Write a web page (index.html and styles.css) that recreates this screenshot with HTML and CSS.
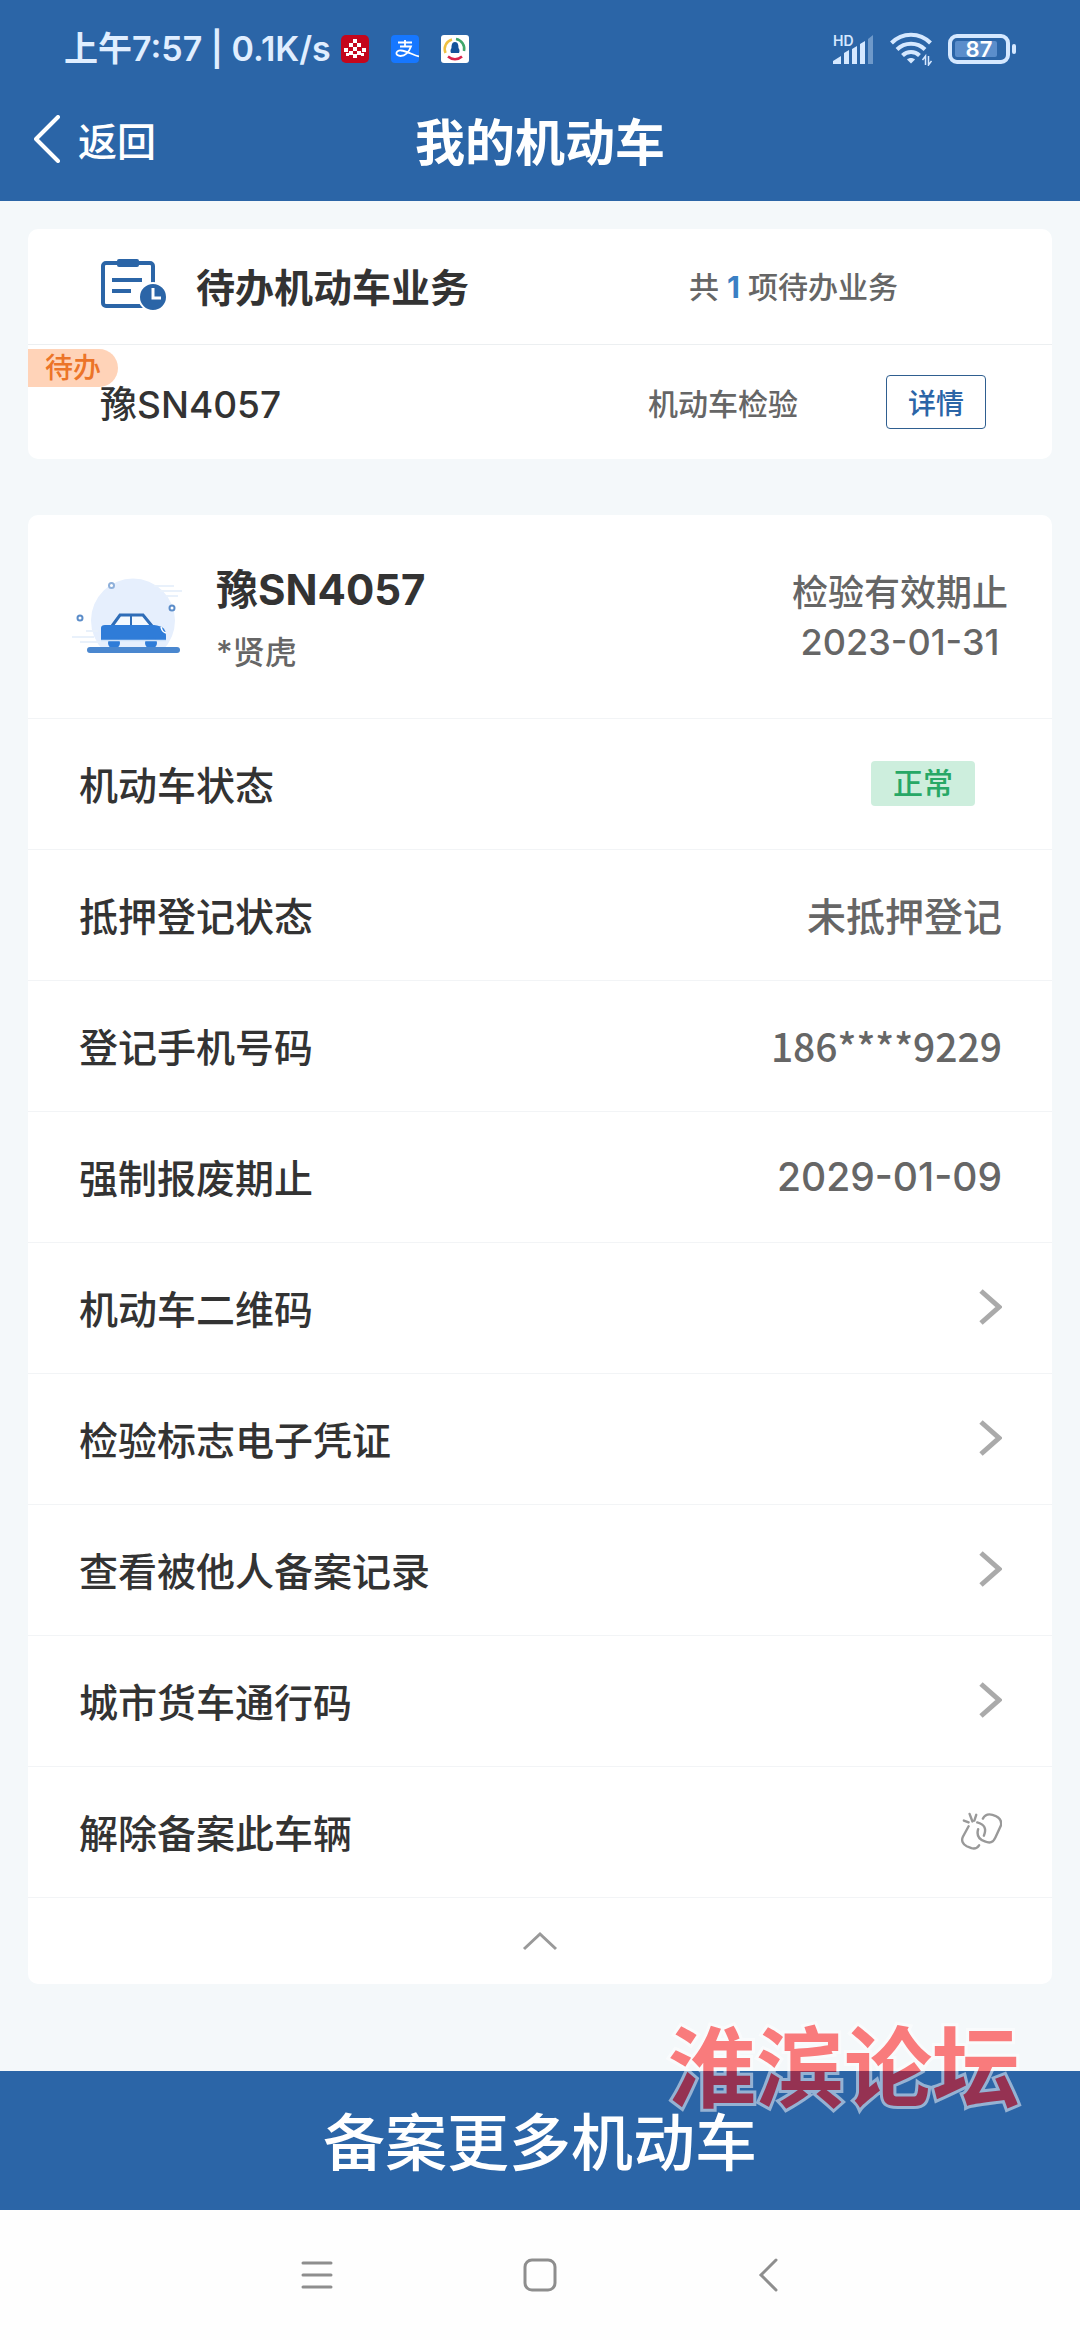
FILE: index.html
```html
<!DOCTYPE html>
<html lang="zh-CN">
<head>
    <meta charset="UTF-8">
    <meta name="viewport" content="width=device-width, initial-scale=1.0">
    <title>我的机动车</title>
    <link rel="stylesheet" href="styles.css">
</head>
<body>
    <!-- Header -->
    <header class="top">
        <div class="status-bar">
            <span class="status-time">上午7:57 | 0.1K/s</span>
            <div class="status-apps">
                <svg width="28" height="28" viewBox="0 0 28 28" aria-hidden="true">
                    <rect width="28" height="28" rx="5" fill="#c4061c"/>
                    <g fill="#fff">
                        <rect x="12" y="4" width="4" height="4"/>
                        <rect x="8" y="8" width="4" height="4"/>
                        <rect x="16" y="8" width="4" height="4"/>
                        <rect x="12" y="12" width="4" height="4"/>
                        <rect x="3" y="13" width="4" height="4"/>
                        <rect x="21" y="13" width="4" height="4"/>
                        <rect x="8" y="16" width="4" height="4"/>
                        <rect x="16" y="16" width="4" height="4"/>
                        <rect x="5" y="18" width="3" height="3"/>
                        <rect x="12" y="19" width="4" height="4"/>
                        <rect x="20" y="18" width="3" height="3"/>
                    </g>
                </svg>
                <svg width="28" height="28" viewBox="0 0 28 28" aria-hidden="true">
                    <rect width="28" height="28" rx="4" fill="#1677ff"/>
                    <path d="M14 5v6M7 7.500h14M9 11.500h11c-1.500 4-5 9.500-10.500 9.500-5.500 0-5.500-6 .5-5.500 6 .5 12 4.500 18 6" fill="none" stroke="#fff" stroke-width="1.800"/>
                </svg>
                <svg width="28" height="28" viewBox="0 0 28 28" aria-hidden="true">
                    <rect width="28" height="28" rx="3" fill="#fff"/>
                    <g fill="none" stroke-width="2.500">
                        <path d="M4.500 18A10 10 0 0 1 11 4.500" stroke="#f0c040"/>
                        <path d="M15 4a10 10 0 0 1 8 12" stroke="#3fa66b"/>
                        <path d="M7 21.500c4 3.500 10 3.500 14 0" stroke="#d8234a"/>
                    </g>
                    <path d="M14 7c3 0 3.500 3 3.500 6 1.500 2 1 4 .5 5H10c-.500-1-1-3 .5-5 0-3 .5-6 3.500-6z" fill="#14539a"/>
                </svg>
            </div>
            <div class="status-icons">
                <svg width="42" height="34" viewBox="0 0 42 34" aria-hidden="true">
                    <text class="hd" x="1" y="14">HD</text>
                    <g fill="#d5e8ff">
                        <path d="M1 32v-3l8-5v8zM12 32V21l5-3v14zM20 32V17l5-3v18zM28 32V12l5-3v23z"/>
                        <path d="M36 32V7l5-4v29z" opacity=".4"/>
                    </g>
                </svg>
                <svg width="42" height="34" viewBox="0 0 42 34" aria-hidden="true">
                    <g fill="none" stroke="#d5e8ff" stroke-width="4">
                        <path d="M1.500 11a27 27 0 0 1 39 0"/>
                        <path d="M7 17.500a20 20 0 0 1 28 0"/>
                        <path d="M12.500 23.500a12 12 0 0 1 17 0"/>
                    </g>
                    <path d="M17 27.500c2-2 6-2 8 0l-4 4z" fill="#d5e8ff"/>
                    <path d="M35.500 33V24l-3 4M38.500 24v9l3-4" fill="none" stroke="#d5e8ff" stroke-width="1.500"/>
                </svg>
                <svg width="68" height="30" viewBox="0 0 68 30" aria-hidden="true">
                    <rect x="2" y="2" width="58" height="26" rx="7" fill="none" stroke="#d5e8ff" stroke-width="4"/>
                    <rect x="7" y="7" width="42" height="16" rx="2" fill="#5b8ecb"/>
                    <rect x="64" y="10" width="4" height="10" rx="2" fill="#d5e8ff"/>
                    <text class="battery-level" x="31" y="23">87</text>
                </svg>
            </div>
        </div>
        <div class="title-bar">
            <a class="back" href="#">
                <svg width="26" height="48" viewBox="0 0 26 48" aria-hidden="true">
                    <path d="M24 2L2 24l22 22" fill="none" stroke="#fff" stroke-width="4" stroke-linecap="round" stroke-linejoin="round"/>
                </svg>
                返回
            </a>
            <h1>我的机动车</h1>
        </div>
    </header>

    <main class="content">
        <!-- Pending business -->
        <section class="card">
            <div class="todo-head">
                <svg width="68" height="54" viewBox="0 0 68 54" aria-hidden="true">
                    <rect x="3" y="5" width="50" height="43" rx="3" fill="none" stroke="#2b65a7" stroke-width="4"/>
                    <rect x="17" y="1" width="22" height="8" rx="2" fill="#2b65a7"/>
                    <path d="M12 22h30M12 33h19" stroke="#2b65a7" stroke-width="4"/>
                    <circle cx="53" cy="39" r="14" fill="#2b65a7" stroke="#fff" stroke-width="2"/>
                    <path d="M53 30v10h8" fill="none" stroke="#fff" stroke-width="3"/>
                </svg>
                <h2>待办机动车业务</h2>
                <p class="todo-count">共 <b>1</b> 项待办业务</p>
            </div>
            <div class="todo-item">
                <span class="todo-badge">待办</span>
                <span class="todo-plate">豫SN4057</span>
                <span class="todo-type">机动车检验</span>
                <button class="detail-btn" type="button">详情</button>
            </div>
        </section>

        <!-- Vehicle info -->
        <section class="card">
            <div class="car-head">
                <svg class="car-icon" width="112" height="80" viewBox="0 0 112 80" aria-hidden="true">
                    <path d="M31 73A42 42 0 1 1 91 73z" fill="#e6effd"/>
                    <path d="M82 9h20M88 14h22M94 19h12M0 60h22M8 65h20M14 54h12" stroke="#e9f1fb" stroke-width="2"/>
                    <g fill="#fff" stroke-width="2">
                        <circle cx="39.500" cy="8.500" r="2.500" stroke="#8fb0da"/>
                        <circle cx="100" cy="31" r="2.500" stroke="#5c8dc9"/>
                        <circle cx="8" cy="41" r="2.500" stroke="#5c8dc9"/>
                    </g>
                    <path d="M40 49l8-11h23l9 11" fill="#f4f9ff" stroke="#2f6db8" stroke-width="3"/>
                    <path d="M59 38v11" stroke="#2f6db8" stroke-width="2"/>
                    <path d="M29 51q0-3 4-3h49c9 1 12 4 12 11v4H29z" fill="#2f7cd8"/>
                    <path d="M89 50c1 4 2 5 5 6" fill="none" stroke="#fff" stroke-width="1.500"/>
                    <circle cx="42" cy="66" r="6" fill="#2f7cd8"/>
                    <circle cx="79" cy="66" r="6" fill="#2f7cd8"/>
                    <path d="M29 63.500h65" stroke="#cfe1f8" stroke-width="1.500"/>
                    <path d="M18 73h87" stroke="#4a87cf" stroke-width="6" stroke-linecap="round"/>
                </svg>
                <div class="car-owner">
                    <h2>豫SN4057</h2>
                    <p>*贤虎</p>
                </div>
                <div class="car-valid">检验有效期止<br>2023-01-31</div>
            </div>
            <dl class="info">
                <div class="row"><dt>机动车状态</dt><dd class="state">正常</dd></div>
                <div class="row"><dt>抵押登记状态</dt><dd>未抵押登记</dd></div>
                <div class="row"><dt>登记手机号码</dt><dd class="phone">186****9229</dd></div>
                <div class="row"><dt>强制报废期止</dt><dd>2029-01-09</dd></div>
            </dl>
            <nav>
                <a class="row" href="#">机动车二维码
                    <svg width="24" height="40" viewBox="0 0 24 40" aria-hidden="true"><path d="M3 4l18 16L3 36" class="arrow"/></svg>
                </a>
                <a class="row" href="#">检验标志电子凭证
                    <svg width="24" height="40" viewBox="0 0 24 40" aria-hidden="true"><path d="M3 4l18 16L3 36" class="arrow"/></svg>
                </a>
                <a class="row" href="#">查看被他人备案记录
                    <svg width="24" height="40" viewBox="0 0 24 40" aria-hidden="true"><path d="M3 4l18 16L3 36" class="arrow"/></svg>
                </a>
                <a class="row" href="#">城市货车通行码
                    <svg width="24" height="40" viewBox="0 0 24 40" aria-hidden="true"><path d="M3 4l18 16L3 36" class="arrow"/></svg>
                </a>
                <a class="row" href="#">解除备案此车辆
                    <svg width="42" height="40" viewBox="0 0 44 42" aria-hidden="true">
                        <g fill="none" stroke="#999" stroke-width="2.500" stroke-linecap="round">
                            <path d="M9 16L3 27c-2 4 0 8 4 10l5 2c3 1 6 0 8-3"/>
                            <path d="M18 12c8 2 10 7 7 14"/>
                            <path d="M24 8c2-4 6-5 10-4 7 2 10 6 9 11l-6 13c-2 5-6 6-11 4-6-2-9-6-7-13"/>
                            <path d="M10 3l3 8M17 4l-2 6M4 10l5 2"/>
                        </g>
                    </svg>
                </a>
            </nav>
            <button class="collapse" type="button" aria-label="收起">
                <svg width="36" height="20" viewBox="0 0 36 20" aria-hidden="true">
                    <path d="M2 18L18 3l16 15" fill="none" stroke="#999" stroke-width="3"/>
                </svg>
            </button>
        </section>
    </main>

    <footer class="bottom">
        <span class="watermark">淮滨论坛</span>
        <button class="add-btn" type="button">备案更多机动车</button>
    </footer>

    <!-- System navigation -->
    <div class="sys-nav">
        <button type="button" aria-label="菜单">
            <svg width="32" height="32" viewBox="0 0 32 32" aria-hidden="true"><path d="M2 4h28M2 16h28M2 28h28"/></svg>
        </button>
        <button type="button" aria-label="主页">
            <svg width="34" height="34" viewBox="0 0 34 34" aria-hidden="true"><rect x="2" y="2" width="30" height="30" rx="7"/></svg>
        </button>
        <button type="button" aria-label="返回">
            <svg width="32" height="34" viewBox="0 0 32 34" aria-hidden="true"><path d="M29 2L14 17l15 15"/></svg>
        </button>
    </div>
</body>
</html>
```

FILE: styles.css
```css
/* General styles */
* {
    box-sizing: border-box;
}

body {
    margin: 0;
    min-height: 100vh;
    display: flex;
    flex-direction: column;
    background: #f4f8fa;
    color: #333;
    font-family: Inter, "Noto Sans CJK SC", sans-serif;
    font-size: 39px;
    font-weight: 500;
}

h1, h2, p, dl, dd {
    margin: 0;
}

svg {
    display: block;
    flex: none;
}

a {
    color: inherit;
    text-decoration: none;
}

button {
    font: inherit;
    cursor: pointer;
    border: none;
    background: none;
    padding: 0;
}

/* Header */
.top {
    background: #2b65a7;
    color: #fff;
}

.status-bar {
    display: flex;
    align-items: center;
    height: 82px;
    padding: 16px 64px 0;
}

.status-time {
    color: #e0eeff;
    font-size: 34px;
    font-weight: 600;
    line-height: 40px;
}

.status-apps {
    display: flex;
    gap: 22px;
    margin-left: 10px;
}

.status-icons {
    display: flex;
    align-items: center;
    gap: 16px;
    margin-left: auto;
}

.hd {
    fill: #d5e8ff;
    font-size: 14px;
    font-weight: 600;
}

.battery-level {
    fill: #fff;
    font-size: 22px;
    font-weight: 600;
    text-anchor: middle;
}

.title-bar {
    display: grid;
    grid-template-columns: 1fr auto 1fr;
    align-items: center;
    height: 119px;
    padding: 0 34px 6px;
}

.back {
    display: flex;
    align-items: center;
    gap: 18px;
}

h1 {
    font-size: 50px;
    font-weight: 700;
}

/* Cards */
.content {
    flex: 1;
    padding: 28px 28px 86px;
}

.card {
    background: #fff;
    border-radius: 10px;
    overflow: hidden;
}

.card + .card {
    margin-top: 56px;
}

h2 {
    font-size: 39px;
    font-weight: 700;
}

.todo-head {
    display: flex;
    align-items: center;
    height: 116px;
    padding: 0 154px 4px 72px;
    border-bottom: 1px solid #eceff1;
}

.todo-head h2 {
    margin-left: 28px;
}

.todo-count {
    margin-left: auto;
    color: #666;
    font-size: 30px;
}

.todo-count b {
    color: #3a7fc4;
}

.todo-item {
    position: relative;
    display: flex;
    align-items: center;
    height: 114px;
    padding: 0 66px 0 72px;
}

.todo-badge {
    position: absolute;
    top: 4px;
    left: 0;
    padding: 0 17px;
    border-radius: 0 19px 19px 0;
    background: #ffd3b8;
    color: #ec7428;
    font-size: 28px;
    line-height: 38px;
}

.todo-plate {
    position: relative;
    font-size: 37px;
}

.todo-type {
    margin-left: auto;
    color: #666;
    font-size: 30px;
}

.detail-btn {
    width: 100px;
    height: 54px;
    margin-left: 88px;
    border: 1px solid #2f5f90;
    border-radius: 4px;
    color: #2b65a7;
    font-size: 28px;
}

/* Vehicle header */
.car-head {
    display: flex;
    align-items: flex-start;
    height: 204px;
    padding: 50px 44px 0;
    border-bottom: 1px solid #f2f4f6;
}

.car-icon {
    margin-top: 12px;
}

.car-owner {
    margin-left: 32px;
}

.car-owner h2 {
    font-size: 42px;
    line-height: 50px;
}

.car-owner p {
    margin-top: 14px;
    color: #666;
    font-size: 32px;
    line-height: 48px;
}

.car-valid {
    margin-top: 4px;
    margin-left: auto;
    color: #666;
    font-size: 36px;
    line-height: 49px;
    text-align: center;
}

/* Rows */
.row {
    display: flex;
    align-items: center;
    justify-content: space-between;
    height: 131px;
    padding: 0 50px 2px 51px;
    border-bottom: 1px solid #f2f4f6;
}

.row dd {
    color: #666;
}

.row .phone {
    font-family: "Noto Sans CJK SC", sans-serif;
}

.row .state {
    margin-right: 27px;
    padding: 0 22px;
    border-radius: 4px;
    background: #cdeedd;
    color: #27a866;
    font-size: 30px;
    line-height: 45px;
}

.arrow {
    fill: none;
    stroke: #aaa;
    stroke-width: 5;
}

.collapse {
    display: flex;
    align-items: center;
    justify-content: center;
    width: 100%;
    height: 86px;
}

/* Bottom button */
.bottom {
    position: relative;
    background: #2b65a7;
}

.add-btn {
    width: 100%;
    height: 139px;
    padding-bottom: 4px;
    color: #fff;
    font-size: 62px;
}

.watermark {
    position: absolute;
    right: 60px;
    bottom: 96px;
    color: #f00;
    font-family: "Noto Sans CJK SC", sans-serif;
    font-size: 88px;
    font-weight: 700;
    line-height: 104px;
    opacity: 0.5;
    paint-order: stroke fill;
    -webkit-text-stroke: 6px #fff;
    pointer-events: none;
}

/* System navigation */
.sys-nav {
    display: flex;
    justify-content: center;
    align-items: center;
    gap: 190px;
    height: 130px;
    background: #fefefe;
}

.sys-nav svg {
    fill: none;
    stroke: #8e8e8e;
    stroke-width: 3;
    stroke-linecap: round;
}
```
